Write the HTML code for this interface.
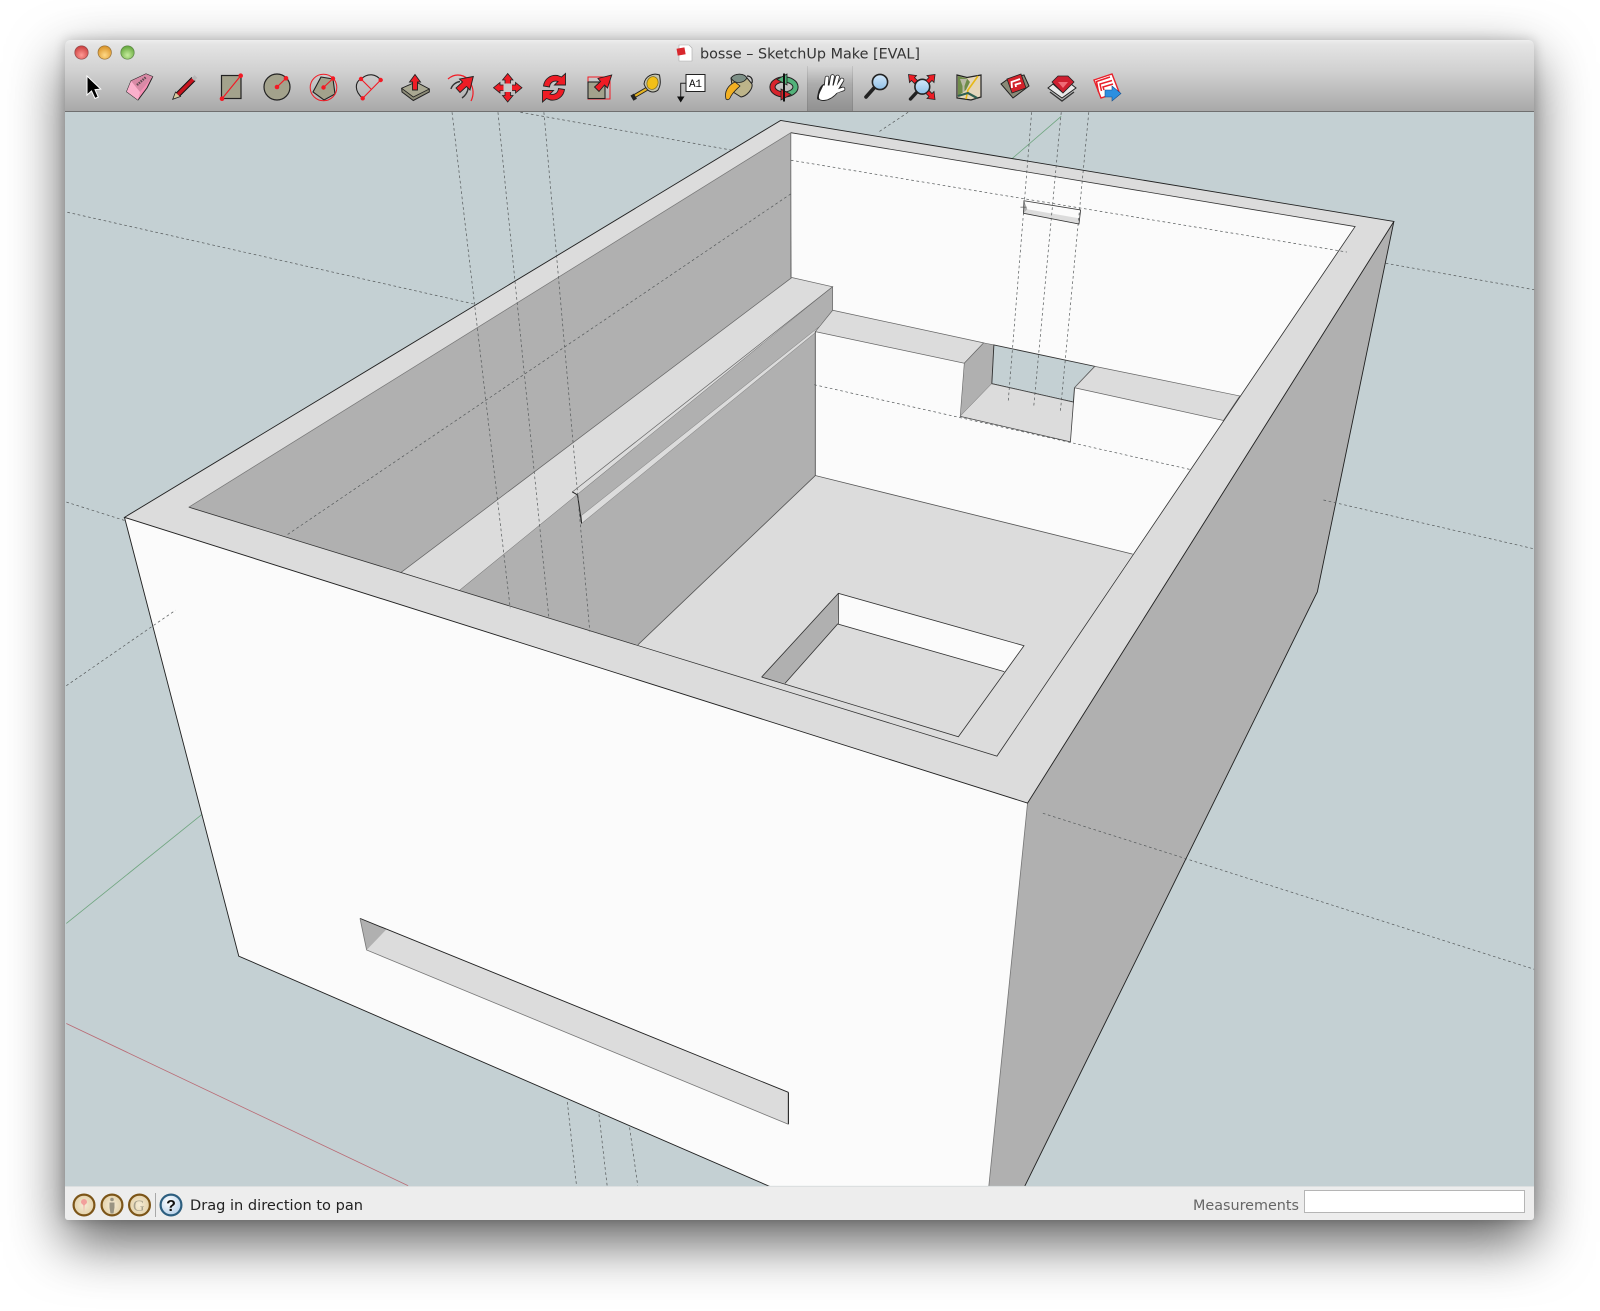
<!DOCTYPE html>
<html lang="en">
<head>
<meta charset="utf-8">
<title>bosse – SketchUp Make [EVAL]</title>
<style>
html,body{margin:0;padding:0;background:#fff;width:1600px;height:1311px;overflow:hidden}
#win{position:absolute;left:65px;top:40px;width:1469px;height:1180px;border-radius:5px 5px 3px 3px;background:#c4d0d3;box-shadow:0 22px 56px rgba(0,0,0,.64),0 0 12px rgba(0,0,0,.2)}
#bar{position:absolute;left:0;top:0;right:0;height:72px;border-radius:5px 5px 0 0;background:linear-gradient(#eeeeee 0,#e4e4e4 6%,#d0d0d0 45%,#a9a9a9 100%);border-bottom:1px solid #6f6f6f;box-sizing:border-box}
#sel{position:absolute;left:742px;top:26px;width:46px;height:45px;background:linear-gradient(rgba(0,0,0,0),rgba(0,0,0,.12) 40%,rgba(0,0,0,.14));border-left:1px solid rgba(0,0,0,.08);border-right:1px solid rgba(0,0,0,.08);box-sizing:border-box}
#status{position:absolute;left:0;right:0;bottom:0;height:34px;background:#ededed;border-top:1px solid #dcdfe0;box-sizing:border-box;border-radius:0 0 3px 3px}
svg{position:absolute;left:0;top:0;display:block}
text{font-family:"DejaVu Sans","Liberation Sans",sans-serif}
</style>
</head>
<body>
<div id="win"><div id="bar"><div id="sel"></div></div><div id="status"></div></div>

<svg width="1600" height="1311" viewBox="0 0 1568 1284.75">
<defs><clipPath id="cv"><rect x="63.8" y="109.7" width="1439.6" height="1052.5"/></clipPath></defs>
<g clip-path="url(#cv)">
 <g fill="none" stroke-width=".8">
  <path d="M65 905L198 798" stroke="#6fa57f"/>
  <path d="M1040 114L990 157" stroke="#6fa57f"/>
  <path d="M65 1003L400 1162" stroke="#b96a74"/>
 </g>
 <g fill="none" stroke="#55595a" stroke-width=".7" stroke-dasharray="2.6 2.6">
  <path d="M66 208L465 298"/>
  <path d="M510 110L722 148"/>
  <path d="M1358 258L1504 284"/>
  <path d="M65 492L122 510"/>
  <path d="M890 110L860 130"/>
  <path d="M556 1080L565 1162M587 1092L595 1162M617 1105L625 1162"/>
 </g>
 <polygon points="1007,787 1366,217 1291,580 1004,1163 969,1163" fill="#b0b0b0"/>
 <path d="M1366 217L1291 580L1004 1163" fill="none" stroke="#222" stroke-width=".9"/>
 <polygon points="122,507 1007,787 969,1163 755,1163 234,937" fill="#fbfbfb"/>
 <path d="M122 507L234 937L755 1163" fill="none" stroke="#222" stroke-width=".9"/>
 <path d="M1007 787L969 1163" fill="none" stroke="#777" stroke-width=".8"/>
 <polygon points="185,497 775,130 1328,222 977,741" fill="#fbfbfb"/>
 <polygon points="185,497 775,130 776,272 393,561" fill="#b0b0b0"/>
 <polygon points="393,561 776,272 816,281 450,579" fill="#dcdcdc" stroke="#666" stroke-width=".7"/>
 <polygon points="450,579 816,281 816,304 799,324 799,466 625,632" fill="#b0b0b0"/>
 <path d="M561 482L816 281L816 304" fill="none" stroke="#666" stroke-width=".7"/>
 <polygon points="570,505 803,320 799,326 570,513" fill="#dcdcdc" stroke="#888" stroke-width=".5"/>
 <path d="M560.7 482L566 485L570 513" fill="none" stroke="#222" stroke-width="1"/>
 <polygon points="816,304 964,336 945,356 799,325" fill="#dcdcdc" stroke="#666" stroke-width=".7"/>
 <path d="M799 325V466" stroke="#555" stroke-width=".9"/>
 <polygon points="964,336 974,338 972,376 941,408 945,356" fill="#b0b0b0" stroke="#666" stroke-width=".6"/>
 <polygon points="974,338 1073,359 1053,380 1052,394 972,376" fill="#c4d0d3"/>
 <path d="M974 338L1073 359L1053 380L1052 394L972 376Z" fill="none" stroke="#333" stroke-width=".9"/>
 <polygon points="972,376 1052,394 1049,433 941,408" fill="#dcdcdc"/>
 <path d="M972 376L1052 394L1049 433L941 408" fill="none" stroke="#444" stroke-width=".8"/>
 <polygon points="1073,359 1215,388 1199,412 1053,380" fill="#dcdcdc" stroke="#666" stroke-width=".7"/>
 <polygon points="799,466 1110,543 977,741 625,632" fill="#dcdcdc"/>
 <path d="M625 632L799 466L1110 543" fill="none" stroke="#555" stroke-width=".8"/>
 <polygon points="821.6,581.5 1003.5,632.8 984.2,658.2 820.9,611.5" fill="#fbfbfb"/>
 <polygon points="821.6,581.5 820.9,611.5 769.3,669.7 746.4,663.5" fill="#b0b0b0"/>
 <path d="M746.4 663.5L821.6 581.5L1003.5 632.8L939.2 722L746.4 663.5M769.3 669.7L820.9 611.5L984.2 658.2M821.6 581.5V611.5" fill="none" stroke="#333" stroke-width=".8"/>
 <path fill-rule="evenodd" d="M122 507L765 118L1366 217L1007 787ZM185 497L977 741L1328 222L775 130Z" fill="#dcdcdc"/>
 <path d="M122 507L765 118L1366 217L1007 787Z" fill="none" stroke="#222" stroke-width=".9"/>
 <path d="M185 497L977 741L1328 222L775 130" fill="none" stroke="#333" stroke-width=".8"/>
 <path d="M185 497L775 130" fill="none" stroke="#777" stroke-width=".7"/>
 <path d="M775 130V272" stroke="#666" stroke-width=".8"/>
 <polygon points="1003.5,196.7 1059,205.8 1057.4,219.5 1003,209" fill="#fbfbfb"/>
 <polygon points="1006.8,205 1058,214 1057.4,219.5 1003,209" fill="#dcdcdc"/>
 <polygon points="1003.5,196.7 1006.8,205 1003,209" fill="#b0b0b0"/>
 <path d="M1003.5 196.7L1059 205.8L1057.4 219.5L1003 209Z" fill="none" stroke="#333" stroke-width=".8"/>
 <path d="M1000 203H1006" stroke="#555" stroke-width=".7"/>
 <polygon points="352.8,900 772.6,1070.5 772.6,1101.8 359.3,931" fill="#dcdcdc"/>
 <polygon points="352.8,900 379,910.4 359.3,931" fill="#b0b0b0"/>
 <path d="M352.8 900L772.6 1070.5" stroke="#222" stroke-width=".9"/>
 <path d="M772.6 1070.5V1101.8" stroke="#111" stroke-width="1"/>
 <path d="M352.8 900L359.3 931L772.6 1101.8" fill="none" stroke="#777" stroke-width=".8"/>
 <g fill="none" stroke="#55595a" stroke-width=".7" stroke-dasharray="2.6 2.6">
  <path d="M443 110L500 596"/>
  <path d="M488 110L538 606"/>
  <path d="M533 110L578 619"/>
  <path d="M775 190L280 525"/>
  <path d="M775 157L1320 247"/>
  <path d="M798 377L1166 460"/>
  <path d="M1011 110L988 394"/>
  <path d="M1040 110L1013 399"/>
  <path d="M1067 110L1039 405"/>
  <path d="M65 672L172 598"/>
  <path d="M1297 490L1504 538"/>
  <path d="M1022 797L1504 950"/>
 </g>
</g>
</svg>

<svg width="1600" height="1311" viewBox="0 0 1600 1311">
<defs>
 <radialGradient id="r" cx=".5" cy=".7" r=".7"><stop offset="0" stop-color="#ff9a94"/><stop offset="1" stop-color="#c93a3a"/></radialGradient>
 <radialGradient id="y" cx=".5" cy=".7" r=".7"><stop offset="0" stop-color="#ffd987"/><stop offset="1" stop-color="#d78f22"/></radialGradient>
 <radialGradient id="g" cx=".5" cy=".7" r=".7"><stop offset="0" stop-color="#c6ec9d"/><stop offset="1" stop-color="#5fa437"/></radialGradient>
 <radialGradient id="c" cx=".5" cy=".5" r=".55"><stop offset="0" stop-color="#f5ecd6"/><stop offset="1" stop-color="#e2cfa6"/></radialGradient>
 <radialGradient id="h" cx=".4" cy=".35" r=".65"><stop offset="0" stop-color="#fff"/><stop offset="1" stop-color="#b9d2ea"/></radialGradient>
 <linearGradient id="lens" x1="0" y1="0" x2="0" y2="1"><stop offset="0" stop-color="#d4e8fa"/><stop offset="1" stop-color="#8fbfe6"/></linearGradient>
</defs>

<circle cx="81.5" cy="52.5" r="6.7" fill="url(#r)" stroke="#8e4a4a" stroke-width=".7"/>
<circle cx="104.7" cy="52.5" r="6.7" fill="url(#y)" stroke="#94703a" stroke-width=".7"/>
<circle cx="127.5" cy="52.5" r="6.7" fill="url(#g)" stroke="#5b8446" stroke-width=".7"/>

<path d="M679 45h10l3 3v13h-13z" fill="#fff" stroke="#aaa" stroke-width=".6"/>
<rect x="677" y="48" width="8" height="7" fill="#d8272d" transform="rotate(-10 681 51)"/>
<text x="700" y="58.5" font-size="14.5" fill="#333" textLength="220" lengthAdjust="spacingAndGlyphs">bosse – SketchUp Make [EVAL]</text>

<!-- select -->
<path d="M87 76V95L91.5 91L95 98.5L98.3 97L95 89.7L100.7 89Z" fill="#000" stroke="#fff" stroke-width="1"/>
<!-- eraser -->
<path d="M131 81L146 74L152.7 76.7L147 88L138 100L126.7 91.7Z" fill="#f78fb5" stroke="#222" stroke-width="1" stroke-linejoin="round"/>
<path d="M131 81L146 74L152.7 76.7L140 92Z" fill="#d98aa6"/>
<path d="M126.7 91.7L131 81L140 92L138 100Z" fill="#fbb0cc"/>
<path d="M137 85L146 77" stroke="#5b4a50" stroke-width="2.4" stroke-dasharray="1.5 1"/>
<!-- pencil -->
<path d="M172.7 99.3L175.5 92L180.5 96.5Z" fill="#d8cba0" stroke="#222" stroke-width=".8"/>
<path d="M178 94.5L193.5 79" stroke="#111" stroke-width="5.6"/>
<path d="M178 94.5L193.5 79" stroke="#c8141e" stroke-width="3.6"/>
<path d="M193 79.500L196 76.500" stroke="#b9b9b9" stroke-width="4"/>
<!-- rectangle -->
<rect x="221.5" y="75.5" width="19.5" height="23" fill="#a3a28c" stroke="#222" stroke-width="1.2"/>
<path d="M222 98.7L240.7 75.7" stroke="#f21a24" stroke-width="1.2"/>
<circle cx="222" cy="98.7" r="2.3" fill="#f21a24"/><circle cx="240.7" cy="75.7" r="2.3" fill="#f21a24"/>
<!-- circle -->
<circle cx="277" cy="87" r="13" fill="#a3a28c" stroke="#222" stroke-width="1.2"/>
<path d="M277 87L286 78.3" stroke="#f21a24" stroke-width="1.2"/>
<circle cx="277" cy="87" r="2.3" fill="#f21a24"/><circle cx="286" cy="78.3" r="2.3" fill="#f21a24"/>
<!-- polygon -->
<polygon points="321,77 333,79 335,94 324,100 313,92" fill="#a3a28c" stroke="#222" stroke-width="1.1"/>
<circle cx="323.5" cy="87.5" r="13.3" fill="none" stroke="#f21a24" stroke-width="1"/>
<path d="M323.5 87.5L333 78.5" stroke="#f21a24" stroke-width="1.2"/>
<circle cx="323.5" cy="87.5" r="2.2" fill="#f21a24"/><circle cx="333" cy="78.5" r="2.2" fill="#f21a24"/>
<!-- arc -->
<path d="M362.7 98.3C354 91 355 82 361 79C368 72.5 376 74 380.7 80" fill="none" stroke="#222" stroke-width="1.1"/>
<path d="M380.7 80L362.7 98.3M361 79L371 89" stroke="#f21a24" stroke-width="1.1" fill="none"/>
<circle cx="361" cy="79" r="2.2" fill="#f21a24"/><circle cx="380.7" cy="80" r="2.2" fill="#f21a24"/><circle cx="362.7" cy="98.3" r="2.2" fill="#f21a24"/>
<!-- push pull -->
<path d="M401.7 88.3L416 82L429.3 89V92L413.3 100.500L402 92Z" fill="#8d8c78" stroke="#222" stroke-width="1"/>
<path d="M401.7 88.3L416 82L429.3 89L413.3 97Z" fill="#a9a892" stroke="#222" stroke-width=".8"/>
<path d="M415 74.500L420.500 82H417.500V90H412.500V82H409.500Z" fill="#ee1c25" stroke="#222" stroke-width=".9"/>
<!-- follow me -->
<path d="M448 79C456 72 466 75 470 82C474 89 474 95 471 101" fill="none" stroke="#f21a24" stroke-width="1.2"/>
<path d="M451 89C452 85 456 82 460 81.5M462 98C465 96 468 92 468 88" fill="none" stroke="#333" stroke-width="1.4"/>
<path d="M473.3 76.5L470 90L466.5 86.5L460 92.5L456 88L462.5 82L459.5 79Z" fill="#ee1c25" stroke="#222" stroke-width=".9"/>
<!-- move -->
<path d="M507.7 73.5L513 80H510.5V85H515.5V82.5L522 87.7L515.5 93V90.5H510.5V95.5H513L507.7 102L502.5 95.5H505V90.5H500V93L493.5 87.7L500 82.5V85H505V80H502.5Z" fill="#ee1c25" stroke="#222" stroke-width=".8"/>
<rect x="503.5" y="83.5" width="8.5" height="8.5" fill="#c9c9c9"/>
<!-- rotate -->
<path d="M543.5 86C544.500 78.500 551 74.500 557.500 75.500L561.500 77L565.500 73.500V85H554.500L558 81.500C553.500 80 550 82.500 549.500 87Z" fill="#ee1c25" stroke="#222" stroke-width=".9"/>
<path d="M564.500 89.500C563.500 97 557 101 550.500 100L546.500 98.500L542.500 102V90.500H553.500L550 94C554.500 95.500 558 93 558.500 88.500Z" fill="#ee1c25" stroke="#222" stroke-width=".9"/>
<!-- scale -->
<rect x="588" y="77" width="22" height="22" fill="none" stroke="#f21a24" stroke-width="1"/>
<rect x="588" y="82" width="17" height="16.5" fill="#a3a28c" stroke="#222" stroke-width="1.1"/>
<path d="M611.7 75L607.5 88L604.5 85L599 91.5L594.5 87L600.5 81.5L598 78.5Z" fill="#ee1c25" stroke="#222" stroke-width=".9"/>
<!-- tape -->
<path d="M633 97L650 87" stroke="#222" stroke-width="4"/>
<path d="M634 96.500L650 87" stroke="#e6b422" stroke-width="2.200"/>
<rect x="631.500" y="94.500" width="4" height="6" fill="#222" transform="rotate(-30 633 97)"/>
<path d="M644 84C645 76 653 72.500 659.500 75C660.500 81 661 85 658 90C653 94 647 92 644 84Z" fill="#c3c3b0" stroke="#222" stroke-width="1"/>
<ellipse cx="652.500" cy="83" rx="5.500" ry="6.500" fill="#f2bf16" stroke="#7c6a20" stroke-width=".7" transform="rotate(20 652.500 83)"/>
<!-- text -->
<rect x="686" y="74.500" width="19" height="17" fill="#fff" stroke="#222" stroke-width="1"/>
<text x="689" y="87" font-size="11" fill="#111" style="font-family:'Liberation Mono',monospace" textLength="13">A1</text>
<path d="M686 83.300H680.700V97" fill="none" stroke="#222" stroke-width="1"/>
<path d="M677 96.500H684.500L680.700 102.500Z" fill="#111"/>
<!-- paint bucket -->
<path d="M731 78C735 73 744 73 747 78L752 84C753 89 747 96 741 97L733 92Z" fill="#bdb48a" stroke="#222" stroke-width="1"/>
<path d="M731 78C735 73 744 73 747 78C744 83 735 85 731 78Z" fill="#7d9087" stroke="#222" stroke-width=".8"/>
<path d="M735 82C728 85 724 92 726 99C727 100 729 100 730 98C732 93 736 90 740 86Z" fill="#f2b022" stroke="#222" stroke-width=".8"/>
<path d="M747 76C751 76 753 79 752 83" fill="none" stroke="#222" stroke-width="1.200"/>
<!-- orbit -->
<g fill="none">
 <path d="M784 79.500A11.500 7.500 0 0 0 784 94.500" stroke="#222" stroke-width="6.200"/>
 <path d="M784 79.500A11.500 7.500 0 0 0 784 94.500" stroke="#d8242c" stroke-width="4.200"/>
 <path d="M784 79.500A11.500 7.500 0 0 1 784 94.500" stroke="#222" stroke-width="6.200"/>
 <path d="M784 79.500A11.500 7.500 0 0 1 784 94.500" stroke="#52b27a" stroke-width="4.200"/>
</g>
<path d="M781 89L791 94.500L781 100Z" fill="#d8242c" stroke="#222" stroke-width=".8"/>
<path d="M787 74L777 79.500L787 85Z" fill="#52b27a" stroke="#222" stroke-width=".8"/>
<path d="M784 73.500V101.500" stroke="#111" stroke-width="2"/>
<!-- hand -->
<g fill="none" stroke-linecap="round">
 <path d="M826 87L827 78M830.500 86L832.500 76.500M834.500 86.500L837.500 77M837.500 88L842 80M836 91L843 89" stroke="#222" stroke-width="4.600"/>
 <path d="M819 98C820 92 821 88 824 86" stroke="#222" stroke-width="4"/>
</g>
<path d="M819 99C817 95 821 90 823 85H838V92C834 97 829 100 824 100.500C822 100.500 820 100.500 819 99Z" fill="#fff" stroke="#222" stroke-width=".9"/>
<g fill="none" stroke-linecap="round" stroke="#fff" stroke-width="3">
 <path d="M826 88L827 78M830.500 88L832.500 76.500M834.500 88L837.500 77M836.500 89L842 80M835 92L843 89"/>
</g>
<!-- magnifier -->
<path d="M874 88L866 97" stroke="#222" stroke-width="3.600" stroke-linecap="round"/>
<circle cx="880" cy="82" r="7.600" fill="url(#lens)" stroke="#222" stroke-width="1.600"/>
<!-- zoom extents -->
<path d="M917 92L910.500 99" stroke="#222" stroke-width="3.400" stroke-linecap="round"/>
<circle cx="922.300" cy="86.700" r="7.400" fill="url(#lens)" stroke="#222" stroke-width="1.600"/>
<g fill="#ee1c25" stroke="#222" stroke-width=".8">
 <path d="M908.500 74.500L916.500 75.500L914.500 77.700L917.500 80.500L914.500 83.500L911.500 80.500L909.500 82.500Z"/>
 <path d="M935 74.500L934 82.500L932 80.500L929 83.500L926 80.500L929 77.500L927 75.500Z"/>
 <path d="M935 99.500L927 98.500L929 96.500L926 93.500L929 90.500L932 93.500L934 91.500Z"/>
</g>
<!-- map -->
<path d="M957 75L967 77.500L981 75V97L971 100L957 98Z" fill="#e3d5bb" stroke="#222" stroke-width="1.200"/>
<path d="M958 76L967 78.500L970 82L966 90L958 96Z" fill="#6f8c4a"/>
<path d="M960 79H967L964.500 86V92H962.500V86Z" fill="#b9b9a6"/>
<path d="M978 76L968 90L966 99" fill="none" stroke="#e7b816" stroke-width="1.600"/>
<path d="M958 96L968 93L977 98" fill="none" stroke="#2f5f52" stroke-width="2.200"/>
<!-- warehouse -->
<path d="M1001 84L1008 79L1024 75L1029 86L1013 98Z" fill="#8a8a78" stroke="#222" stroke-width="1"/>
<path d="M1007 79L1021 74L1026 88L1012 93Z" fill="#d3222a" stroke="#222" stroke-width=".8"/>
<path d="M1012 88L1011.500 82L1020 79M1016 87L1015.500 84.500L1021 83" fill="none" stroke="#fff" stroke-width="1.800"/>
<!-- ruby -->
<path d="M1048 88L1062 98L1076 88L1071 84L1062 92L1053 84Z" fill="#e8e8e8" stroke="#222" stroke-width="1"/>
<path d="M1050 92L1062 101L1074 92" fill="none" stroke="#333" stroke-width="1.400"/>
<path d="M1052 82L1058 76H1068L1074 82L1063 93Z" fill="#cf1f30" stroke="#222" stroke-width=".8"/>
<path d="M1058 82H1068L1063 88Z" fill="#f06a76"/>
<!-- export -->
<path d="M1094 80L1112 74L1119 92L1101 98Z" fill="#fff" stroke="#e8202a" stroke-width="1.400"/>
<path d="M1098.500 92L1096.500 81.500L1110 77M1101.500 91L1100 84L1112 80.500M1104 90L1103 87L1113 84" fill="none" stroke="#e8202a" stroke-width="1.500"/>
<path d="M1105 90H1112V86L1121 93.500L1112 101V97H1105Z" fill="#2c8fe0" stroke="#174f8c" stroke-width=".6"/>

<!-- status icons -->
<g stroke="#7c5518" stroke-width="2.200" fill="url(#c)">
 <circle cx="84" cy="1205" r="10.400"/><circle cx="112" cy="1205" r="10.400"/><circle cx="139.500" cy="1205" r="10.400"/>
</g>
<path d="M84 1199a3 3 0 0 1 3 3c0 1.800-2 2.500-2.500 3.500l-.5 7-.5-7c-.5-1-2.500-1.700-2.500-3.500a3 3 0 0 1 3-3Z" fill="#f2a09c"/>
<circle cx="112" cy="1199.500" r="1.800" fill="#9a9482"/><path d="M109.500 1202.500h5v5l-1 6h-3l-1-6Z" fill="#9a9482"/>
<text x="133" y="1211" font-size="16" fill="#a8a28e" style="font-family:'Liberation Serif',serif">G</text>
<path d="M155.500 1193V1217" stroke="#a8a8a8" stroke-width="1"/>
<circle cx="171" cy="1205" r="10.400" fill="url(#h)" stroke="#2c5e7f" stroke-width="2.200"/>
<text x="171" y="1211" font-size="16" font-weight="bold" fill="#111" text-anchor="middle" style="font-family:'Liberation Sans',sans-serif">?</text>

<text x="190" y="1210" font-size="14.500" fill="#222" textLength="173" lengthAdjust="spacingAndGlyphs">Drag in direction to pan</text>
<text x="1193" y="1210" font-size="14.500" fill="#666" textLength="106" lengthAdjust="spacingAndGlyphs">Measurements</text>
<rect x="1304.500" y="1190.500" width="220" height="22" fill="#fff" stroke="#b5b5b5" stroke-width="1"/>
</svg>
</body>
</html>
